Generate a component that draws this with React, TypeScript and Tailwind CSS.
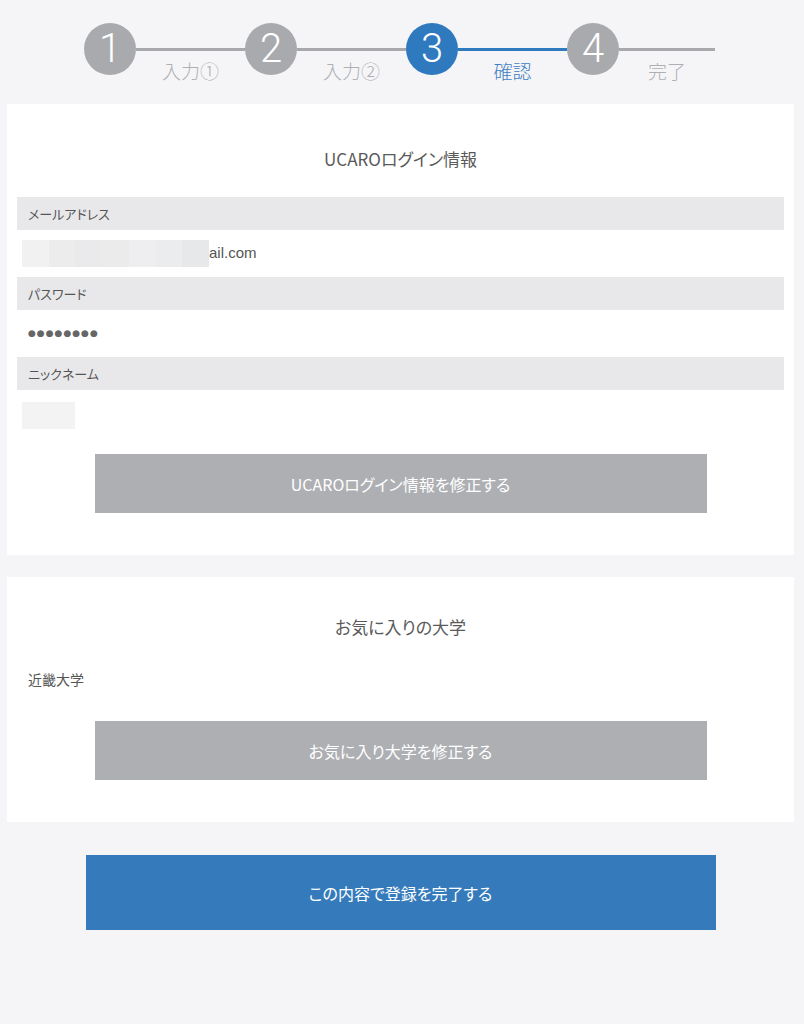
import React from 'react';

const steps = [
  { num: '1', label: '入力①', last: false },
  { num: '2', label: '入力②', last: false },
  { num: '3', label: '確認', last: false },
  { num: '4', label: '完了', last: true },
];

const ACTIVE = 2;

function Stepper() {
  return (
    <div className="flex pl-[84px] pt-[23px] h-[104px]">
      {steps.map((s, i) => {
        const active = i === ACTIVE;
        return (
          <div key={s.num} className="flex">
            <div
              className={
                'w-[52px] h-[52px] rounded-full flex items-center justify-center text-white text-[40px] font-light leading-none ' +
                (active ? 'bg-[#2f79bf]' : 'bg-[#a9aaae]')
              }
              style={{ fontFamily: 'Roboto, "Liberation Sans", sans-serif' }}
            >
              {s.num}
            </div>
            <div className={'flex flex-col ' + (s.last ? 'w-[96px]' : 'w-[109px]')}>
              <div className={'mt-[25px] h-[3px] ' + (active ? 'bg-[#2f79bf]' : 'bg-[#a8a9ad]')} />
              <div
                className={
                  'mt-[10px] text-center text-[19px] leading-[20px] font-light ' +
                  (active ? 'text-[#3f80c2]' : 'text-[#aeafb3]')
                }
              >
                {s.label}
              </div>
            </div>
          </div>
        );
      })}
    </div>
  );
}

function LabelBar({ children }: { children: React.ReactNode }) {
  return (
    <div className="h-[33px] bg-[#e8e8ea] flex items-center pl-[11px] text-[13px] text-[#555]">
      {children}
    </div>
  );
}

function Mosaic({ colors, w, h }: { colors: string[]; w: number; h: number }) {
  return (
    <div className="flex" style={{ width: w, height: h }}>
      {colors.map((c, i) => (
        <div key={i} className="flex-1 h-full" style={{ background: c }} />
      ))}
    </div>
  );
}

function GrayButton({ children }: { children: React.ReactNode }) {
  return (
    <div className="flex justify-center">
      <button className="w-[612px] h-[59px] bg-[#aeafb3] text-white text-[16px] flex items-center justify-center">
        {children}
      </button>
    </div>
  );
}

export default function App() {
  return (
    <div
      className="min-h-[1024px] w-full pr-[3px] bg-[#f5f5f7] text-[#555] [font-feature-settings:'palt']"
      style={{ fontFamily: '"Noto Sans CJK JP", "Noto Sans", sans-serif' }}
    >
      <Stepper />

      {/* login info */}
      <div className="mx-[7px] bg-white h-[451px] px-[10px]">
        <h2 className="pt-[42px] h-[93px] text-center text-[17px] text-[#5a5a5a]">UCAROログイン情報</h2>
        <LabelBar>メールアドレス</LabelBar>
        <div className="h-[47px] flex items-center pl-[5px]">
          <Mosaic
            w={187}
            h={27}
            colors={['#f1f1f1', '#ececed', '#eaeaec', '#ebebec', '#eeeef0', '#ebecee', '#e7e8ea']}
          />
          <span className="text-[15px] text-[#555]" style={{ fontFamily: '"Liberation Sans", sans-serif' }}>
            ail.com
          </span>
        </div>
        <LabelBar>パスワード</LabelBar>
        <div className="h-[47px] flex items-center pl-[11px]">
          <span className="text-[9px] tracking-[1px] text-[#666]" style={{ fontFamily: '"DejaVu Sans", sans-serif' }}>
            ●●●●●●●●
          </span>
        </div>
        <LabelBar>ニックネーム</LabelBar>
        <div className="h-[64px] pl-[5px] pt-[12px]">
          <Mosaic w={53} h={27} colors={['#f3f3f3']} />
        </div>
        <GrayButton>UCAROログイン情報を修正する</GrayButton>
      </div>

      {/* favorite university */}
      <div className="mx-[7px] mt-[22px] bg-white h-[245px] px-[10px]">
        <h2 className="pt-[37px] h-[90px] text-center text-[17px] text-[#5a5a5a]">お気に入りの大学</h2>
        <div className="pl-[11px] pt-[2px] h-[54px] text-[14px] text-[#555]">近畿大学</div>
        <GrayButton>お気に入り大学を修正する</GrayButton>
      </div>

      <div className="flex justify-center mt-[33px]">
        <button className="w-[630px] h-[75px] bg-[#357bbc] text-white text-[16px] flex items-center justify-center">
          この内容で登録を完了する
        </button>
      </div>
    </div>
  );
}
